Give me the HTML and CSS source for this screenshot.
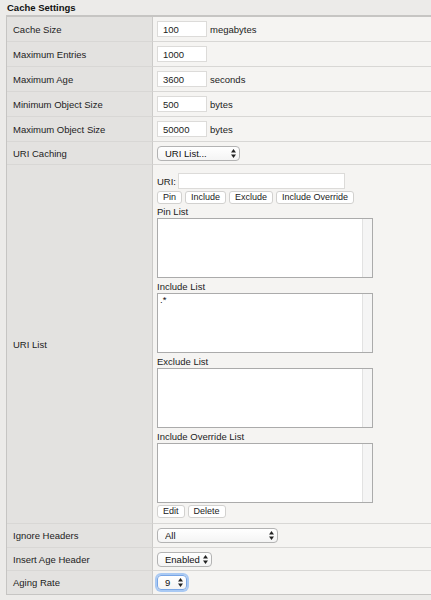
FILE: index.html
```html
<!DOCTYPE html>
<html lang="en">
<head>
  <meta charset="UTF-8" />
  <title>Cache Settings</title>
  <link rel="stylesheet" href="styles.css">
</head>
<body>

<div class="section-title">Cache Settings</div>

<div class="settings">
  <div class="key">Cache Size</div>
  <div class="val"><input type="text" class="num" value="100"> <span class="unit">megabytes</span></div>

  <div class="key">Maximum Entries</div>
  <div class="val"><input type="text" class="num" value="1000"></div>

  <div class="key">Maximum Age</div>
  <div class="val"><input type="text" class="num" value="3600"> <span class="unit">seconds</span></div>

  <div class="key">Minimum Object Size</div>
  <div class="val"><input type="text" class="num" value="500"> <span class="unit">bytes</span></div>

  <div class="key">Maximum Object Size</div>
  <div class="val"><input type="text" class="num" value="50000"> <span class="unit">bytes</span></div>

  <div class="key short">URI Caching</div>
  <div class="val short">
    <span class="select sel-uri">
      <select><option>URI List...</option></select>
      <svg class="arrows" viewBox="0 0 5 9" width="5" height="9"><polygon points="0,3.6 2.5,0 5,3.6"/><polygon points="0,5.4 2.5,9 5,5.4"/></svg>
    </span>
  </div>

  <div class="key tall">URI List</div>
  <div class="val tall uri-box">
    <div class="uri-row">
      <span>URI:</span>
      <input type="text" class="uri-input">
    </div>
    <div class="btn-row">
      <button>Pin</button>
      <button>Include</button>
      <button>Exclude</button>
      <button>Include Override</button>
    </div>
    <div class="list-label">Pin List</div>
    <textarea></textarea>
    <div class="list-label">Include List</div>
    <textarea>.*</textarea>
    <div class="list-label">Exclude List</div>
    <textarea></textarea>
    <div class="list-label">Include Override List</div>
    <textarea></textarea>
    <div class="btn-row">
      <button>Edit</button>
      <button>Delete</button>
    </div>
  </div>

  <div class="key mid">Ignore Headers</div>
  <div class="val mid">
    <span class="select sel-ignore">
      <select><option>All</option></select>
      <svg class="arrows" viewBox="0 0 5 9" width="5" height="9"><polygon points="0,3.6 2.5,0 5,3.6"/><polygon points="0,5.4 2.5,9 5,5.4"/></svg>
    </span>
  </div>

  <div class="key short">Insert Age Header</div>
  <div class="val short">
    <span class="select sel-age">
      <select><option>Enabled</option></select>
      <svg class="arrows" viewBox="0 0 5 9" width="5" height="9"><polygon points="0,3.6 2.5,0 5,3.6"/><polygon points="0,5.4 2.5,9 5,5.4"/></svg>
    </span>
  </div>

  <div class="key mid last">Aging Rate</div>
  <div class="val mid last">
    <span class="select sel-rate focused">
      <select><option>9</option></select>
      <svg class="arrows" viewBox="0 0 5 9" width="5" height="9"><polygon points="0,3.6 2.5,0 5,3.6"/><polygon points="0,5.4 2.5,9 5,5.4"/></svg>
    </span>
  </div>
</div>

</body>
</html>
```

FILE: styles.css
```css
body {
  margin: 0;
  padding: 0 0 0 6px;
  background: #ecebe9;
  font-family: "Liberation Sans", Arial, sans-serif;
  font-size: 9.5px;
  color: #1c1c1c;
  overflow: hidden;
}

.section-title {
  font-weight: bold;
  height: 15px;
  line-height: 14px;
  padding: 1px 0 0 1px;
  box-sizing: border-box;
  color: #111;
}

/* settings grid */
.settings {
  display: grid;
  grid-template-columns: 146px 1fr;
  border-top: 2px solid #c6c5c3;
  border-left: 1px solid #c6c5c3;
}

.key,
.val {
  display: flex;
  align-items: center;
  height: 25px;
  box-sizing: border-box;
  border-bottom: 1px solid #d8d7d5;
}

.key {
  background: #e3e2e0;
  padding-left: 6px;
  border-right: 1px solid #cbcac8;
}

.val {
  background: #f5f4f2;
  padding-left: 4px;
}

.short { height: 23px; }
.mid { height: 24px; }
.tall { height: 359px; }

.last { border-bottom-color: #c6c5c3; }

input.num {
  width: 50px;
  height: 16px;
  box-sizing: border-box;
  border: 1px solid #dcdbd9;
  background: #fff;
  font: inherit;
  color: inherit;
  padding: 0 0 0 5px;
  margin: 0;
}

.unit { margin-left: 3px; }

/* selects */
.select {
  position: relative;
  display: inline-block;
  height: 15px;
}

.select select {
  -webkit-appearance: none;
  appearance: none;
  height: 15px;
  box-sizing: border-box;
  border: 1px solid #b3b3b3;
  border-radius: 4px;
  background: linear-gradient(#ffffff, #f4f4f4);
  font: inherit;
  color: #111;
  padding: 0 0 0 7px;
  margin: 0;
  display: block;
  outline: none;
}

.select .arrows {
  position: absolute;
  right: 4px;
  top: 3px;
  fill: #222;
  pointer-events: none;
}

.sel-uri select { width: 83px; }
.sel-ignore select { width: 121px; }
.sel-age select { width: 55px; }
.sel-rate select { width: 30px; }

.focused select {
  border-color: #79a6e6;
  box-shadow: 0 0 0 2px #a9c9f3;
}

/* URI list block */
.uri-box {
  display: block;
  padding-top: 8px;
}

.uri-row {
  display: flex;
  align-items: center;
  gap: 2px;
  height: 16px;
}

.uri-input {
  width: 167px;
  height: 16px;
  box-sizing: border-box;
  border: 1px solid #dcdbd9;
  background: #fff;
  font: inherit;
  margin: 0;
}

.btn-row {
  display: flex;
  gap: 3px;
  margin-top: 2px;
}

.btn-row button {
  height: 13px;
  box-sizing: border-box;
  padding: 0 5px;
  margin: 0;
  border: 1px solid #d2d1cf;
  border-radius: 3px;
  background: #fff;
  font: inherit;
  font-size: 9px;
  color: #222;
  line-height: 11px;
}

.list-label {
  height: 14px;
  line-height: 15px;
}

textarea {
  display: block;
  width: 216px;
  height: 60px;
  box-sizing: border-box;
  margin: 0 0 1px 0;
  border: 1px solid #ababab;
  resize: none;
  font: inherit;
  color: #111;
  padding: 0 2px;
  line-height: 11px;
  background: linear-gradient(to right, #fff 204px, #e2e2e2 204px, #e2e2e2 205px, #f5f5f5 205px);
}
```
